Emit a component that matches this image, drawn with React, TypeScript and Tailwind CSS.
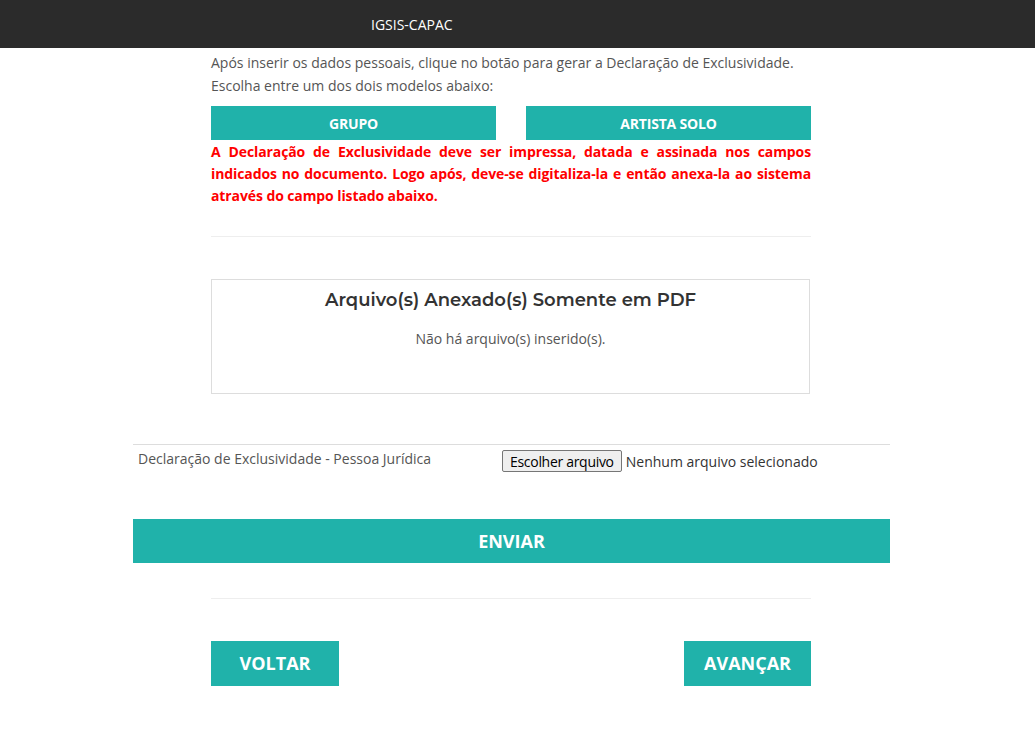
import React from 'react';

const teal = 'bg-[#20b2aa] text-white font-bold';

export default function App() {
  return (
    <div className="min-h-[749px] bg-white font-['Open_Sans',sans-serif] text-[14px] text-[#555]">
      <header className="h-[48px] bg-[#2b2b2b] flex items-center">
        <span className="ml-[371px] text-white text-[14px]">IGSIS-CAPAC</span>
      </header>

      <div className="w-[757px] ml-[133px]">
        <div className="w-[600px] ml-[78px]">
          <p className="mt-[3px] leading-[23px]">
            Após inserir os dados pessoais, clique no botão para gerar a Declaração de Exclusividade.
            <br />
            Escolha entre um dos dois modelos abaixo:
          </p>
          <div className="mt-[9px] flex justify-between">
            <button className={`${teal} w-[285px] h-[34px] text-[14px] tracking-[-0.2px]`}>GRUPO</button>
            <button className={`${teal} w-[285px] h-[34px] text-[14px] tracking-[-0.2px]`}>ARTISTA SOLO</button>
          </div>
          <p className="mt-[1px] text-[#ff0000] font-bold leading-[22px] text-justify tracking-[-0.1px]">
            A Declaração de Exclusividade deve ser impressa, datada e assinada nos campos indicados no documento. Logo após, deve-se digitaliza-la e então anexa-la ao sistema através do campo listado abaixo.
          </p>
          <hr className="mt-[29px] border-t border-[#eee]" />

          <div className="mt-[42px] w-[599px] h-[115px] border border-[#ddd] text-center">
            <h3 className="mt-[7px] font-['Montserrat','Lato',sans-serif] font-semibold text-[18px] text-[#333]">
              Arquivo(s) Anexado(s) Somente em PDF
            </h3>
            <p className="mt-[14px]">Não há arquivo(s) inserido(s).</p>
          </div>
        </div>

        <div className="mt-[50px] border-t border-[#ddd] flex items-start pt-[3px]">
          <span className="ml-[5px] w-[364px]">Declaração de Exclusividade - Pessoa Jurídica</span>
          <div className="flex items-center gap-[4px] mt-[2px]">
            <span className="h-[22px] px-[7px] flex items-center bg-[#efefef] border border-[#767676] rounded-[2px] text-[#000] tracking-[-0.3px]">
              Escolher arquivo
            </span>
            <span className="text-[#333]">Nenhum arquivo selecionado</span>
          </div>
        </div>

        <button className={`${teal} mt-[47px] w-[757px] h-[44px] text-[18px]`}>ENVIAR</button>

        <div className="w-[600px] ml-[78px]">
          <hr className="mt-[35px] border-t border-[#eee]" />
          <div className="mt-[42px] flex justify-between">
            <button className={`${teal} w-[128px] h-[45px] text-[18px]`}>VOLTAR</button>
            <button className={`${teal} w-[127px] h-[45px] text-[18px]`}>AVANÇAR</button>
          </div>
        </div>
      </div>
    </div>
  );
}
